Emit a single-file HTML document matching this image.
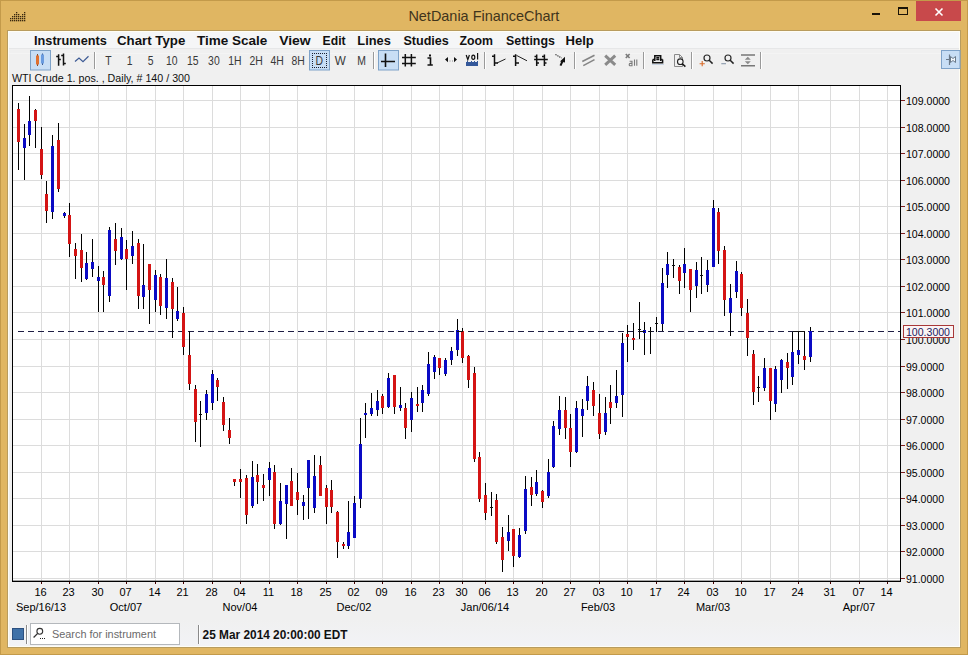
<!DOCTYPE html>
<html><head><meta charset="utf-8"><style>
html,body{margin:0;padding:0;}
body{width:968px;height:655px;position:relative;overflow:hidden;background:#e0b662;font-family:"Liberation Sans",sans-serif;}
.abs{position:absolute;}
svg text{font-family:"Liberation Sans",sans-serif;}
</style></head><body>
<div class="abs" style="left:0;top:0;width:968px;height:655px;box-shadow:inset 0 0 0 1px #c39a4a;"></div>
<div class="abs" style="left:8px;top:31px;width:952px;height:616px;background:#f0f0f0;box-shadow:0 0 0 1px #b89c5e;"></div>
<div class="abs" style="left:8px;top:620px;width:952px;height:27px;background:linear-gradient(#f0f0f0,#f2f3f6);"></div>
<div class="abs" style="left:8px;top:31px;width:952px;height:18px;background:#f5f6f7;"></div>
<div class="abs" style="left:8px;top:49px;width:952px;height:22px;background:#f0f0f0;"></div>
<div class="abs" style="left:8px;top:48px;width:952px;height:1px;background:#e6e7e8;"></div>
<div class="abs" style="left:8px;top:53px;width:952px;height:1px;background:#f4f4f4;"></div>
<div class="abs" style="left:8px;top:31px;width:952px;height:616px;box-shadow:inset -1px -1px 0 #fffdf4, inset 1px 1px 0 #fffdf4;"></div>
<svg class="abs" style="left:0;top:0" width="968" height="655" viewBox="0 0 968 655">
<rect x="16" y="12" width="1.3" height="1.3" fill="#3a2810"/>
<rect x="24" y="12" width="1.3" height="1.3" fill="#3a2810"/>
<rect x="14" y="14" width="1.3" height="1.3" fill="#3a2810"/>
<rect x="16" y="14" width="1.3" height="1.3" fill="#3a2810"/>
<rect x="18" y="14" width="1.3" height="1.3" fill="#3a2810"/>
<rect x="22" y="14" width="1.3" height="1.3" fill="#3a2810"/>
<rect x="24" y="14" width="1.3" height="1.3" fill="#3a2810"/>
<rect x="12" y="16" width="1.3" height="1.3" fill="#3a2810"/>
<rect x="14" y="16" width="1.3" height="1.3" fill="#3a2810"/>
<rect x="16" y="16" width="1.3" height="1.3" fill="#3a2810"/>
<rect x="18" y="16" width="1.3" height="1.3" fill="#3a2810"/>
<rect x="20" y="16" width="1.3" height="1.3" fill="#3a2810"/>
<rect x="22" y="16" width="1.3" height="1.3" fill="#3a2810"/>
<rect x="24" y="16" width="1.3" height="1.3" fill="#3a2810"/>
<rect x="10" y="18" width="1.3" height="1.3" fill="#3a2810"/>
<rect x="12" y="18" width="1.3" height="1.3" fill="#3a2810"/>
<rect x="14" y="18" width="1.3" height="1.3" fill="#3a2810"/>
<rect x="16" y="18" width="1.3" height="1.3" fill="#3a2810"/>
<rect x="18" y="18" width="1.3" height="1.3" fill="#3a2810"/>
<rect x="20" y="18" width="1.3" height="1.3" fill="#3a2810"/>
<rect x="22" y="18" width="1.3" height="1.3" fill="#3a2810"/>
<rect x="24" y="18" width="1.3" height="1.3" fill="#3a2810"/>
<rect x="10" y="20" width="1.3" height="1.3" fill="#3a2810"/>
<rect x="12" y="20" width="1.3" height="1.3" fill="#3a2810"/>
<rect x="14" y="20" width="1.3" height="1.3" fill="#3a2810"/>
<rect x="16" y="20" width="1.3" height="1.3" fill="#3a2810"/>
<rect x="18" y="20" width="1.3" height="1.3" fill="#3a2810"/>
<rect x="20" y="20" width="1.3" height="1.3" fill="#3a2810"/>
<rect x="22" y="20" width="1.3" height="1.3" fill="#3a2810"/>
<rect x="24" y="20" width="1.3" height="1.3" fill="#3a2810"/>
<text x="408.4" y="21" font-size="15" fill="#40341c" textLength="151" lengthAdjust="spacingAndGlyphs">NetDania FinanceChart</text>
<rect x="872" y="13" width="8" height="2" fill="#1a1408"/>
<rect x="898.5" y="7.5" width="9" height="7" fill="none" stroke="#1a1408" stroke-width="1"/><rect x="898" y="7" width="10" height="2" fill="#1a1408"/>
<rect x="916" y="1" width="45" height="20" fill="#c8494b"/>
<path d="M935.5 8.5 L942.5 15.5 M942.5 8.5 L935.5 15.5" stroke="#fff" stroke-width="1.6"/>
<text x="34" y="45" font-size="13" font-weight="bold" fill="#111" textLength="72.8" lengthAdjust="spacingAndGlyphs">Instruments</text>
<text x="117" y="45" font-size="13" font-weight="bold" fill="#111" textLength="68.3" lengthAdjust="spacingAndGlyphs">Chart Type</text>
<text x="197" y="45" font-size="13" font-weight="bold" fill="#111" textLength="70.4" lengthAdjust="spacingAndGlyphs">Time Scale</text>
<text x="279.2" y="45" font-size="13" font-weight="bold" fill="#111" textLength="31.5" lengthAdjust="spacingAndGlyphs">View</text>
<text x="322.6" y="45" font-size="13" font-weight="bold" fill="#111" textLength="23" lengthAdjust="spacingAndGlyphs">Edit</text>
<text x="357.3" y="45" font-size="13" font-weight="bold" fill="#111" textLength="33.5" lengthAdjust="spacingAndGlyphs">Lines</text>
<text x="403.4" y="45" font-size="13" font-weight="bold" fill="#111" textLength="45.5" lengthAdjust="spacingAndGlyphs">Studies</text>
<text x="459.4" y="45" font-size="13" font-weight="bold" fill="#111" textLength="33.5" lengthAdjust="spacingAndGlyphs">Zoom</text>
<text x="506" y="45" font-size="13" font-weight="bold" fill="#111" textLength="48.9" lengthAdjust="spacingAndGlyphs">Settings</text>
<text x="565.5" y="45" font-size="13" font-weight="bold" fill="#111" textLength="28.3" lengthAdjust="spacingAndGlyphs">Help</text>
<rect x="30.5" y="50.5" width="20" height="19.5" fill="#c8def5" stroke="#7ea2c8" stroke-width="1"/>
<rect x="37" y="54" width="1" height="12" fill="#7a4a30"/><rect x="36" y="55.5" width="3" height="9" fill="#e07030"/>
<rect x="42" y="53.5" width="1" height="11.5" fill="#3a5a90"/><rect x="41" y="54.5" width="3" height="9" fill="#6a9ce0"/>
<path d="M58.6 54.3 V65.8 M56.2 56.4 H58.6 M58.6 59.5 H60.8 M63.5 53.4 V65.6 M61.2 55.5 H63.5 M63.5 63.4 H65.8" stroke="#111" stroke-width="1.5" fill="none"/>
<polyline points="75,61.5 79,58 83,61.7 88.5,56.3" fill="none" stroke="#3d5a94" stroke-width="1.2"/>
<rect x="94" y="52" width="1" height="17" fill="#9a9a9a"/><rect x="95" y="52" width="1" height="17" fill="#fff"/>
<rect x="373" y="52" width="1" height="17" fill="#9a9a9a"/><rect x="374" y="52" width="1" height="17" fill="#fff"/>
<rect x="484" y="52" width="1" height="17" fill="#9a9a9a"/><rect x="485" y="52" width="1" height="17" fill="#fff"/>
<rect x="574" y="52" width="1" height="17" fill="#9a9a9a"/><rect x="575" y="52" width="1" height="17" fill="#fff"/>
<rect x="643" y="52" width="1" height="17" fill="#9a9a9a"/><rect x="644" y="52" width="1" height="17" fill="#fff"/>
<rect x="691" y="52" width="1" height="17" fill="#9a9a9a"/><rect x="692" y="52" width="1" height="17" fill="#fff"/>
<rect x="760" y="52" width="1" height="17" fill="#9a9a9a"/><rect x="761" y="52" width="1" height="17" fill="#fff"/>
<text x="108.5" y="65" font-size="13" fill="#383838" text-anchor="middle" textLength="6.36" lengthAdjust="spacingAndGlyphs">T</text>
<text x="129.57999999999998" y="65" font-size="13" fill="#383838" text-anchor="middle" textLength="5.78" lengthAdjust="spacingAndGlyphs">1</text>
<text x="150.66" y="65" font-size="13" fill="#383838" text-anchor="middle" textLength="5.78" lengthAdjust="spacingAndGlyphs">5</text>
<text x="171.74" y="65" font-size="13" fill="#383838" text-anchor="middle" textLength="11.58" lengthAdjust="spacingAndGlyphs">10</text>
<text x="192.82" y="65" font-size="13" fill="#383838" text-anchor="middle" textLength="11.58" lengthAdjust="spacingAndGlyphs">15</text>
<text x="213.89999999999998" y="65" font-size="13" fill="#383838" text-anchor="middle" textLength="11.58" lengthAdjust="spacingAndGlyphs">30</text>
<text x="234.98" y="65" font-size="13" fill="#383838" text-anchor="middle" textLength="13.30" lengthAdjust="spacingAndGlyphs">1H</text>
<text x="256.06" y="65" font-size="13" fill="#383838" text-anchor="middle" textLength="13.30" lengthAdjust="spacingAndGlyphs">2H</text>
<text x="277.14" y="65" font-size="13" fill="#383838" text-anchor="middle" textLength="13.30" lengthAdjust="spacingAndGlyphs">4H</text>
<text x="298.21999999999997" y="65" font-size="13" fill="#383838" text-anchor="middle" textLength="13.30" lengthAdjust="spacingAndGlyphs">8H</text>
<rect x="309.5" y="50.5" width="20" height="19.5" fill="#c8def5" stroke="#7ea2c8" stroke-width="1"/>
<rect x="312" y="53" width="1" height="1" fill="#1a2030"/><rect x="312" y="67" width="1" height="1" fill="#1a2030"/>
<rect x="314" y="53" width="1" height="1" fill="#1a2030"/><rect x="314" y="67" width="1" height="1" fill="#1a2030"/>
<rect x="316" y="53" width="1" height="1" fill="#1a2030"/><rect x="316" y="67" width="1" height="1" fill="#1a2030"/>
<rect x="318" y="53" width="1" height="1" fill="#1a2030"/><rect x="318" y="67" width="1" height="1" fill="#1a2030"/>
<rect x="320" y="53" width="1" height="1" fill="#1a2030"/><rect x="320" y="67" width="1" height="1" fill="#1a2030"/>
<rect x="322" y="53" width="1" height="1" fill="#1a2030"/><rect x="322" y="67" width="1" height="1" fill="#1a2030"/>
<rect x="324" y="53" width="1" height="1" fill="#1a2030"/><rect x="324" y="67" width="1" height="1" fill="#1a2030"/>
<rect x="326" y="53" width="1" height="1" fill="#1a2030"/><rect x="326" y="67" width="1" height="1" fill="#1a2030"/>
<rect x="312" y="55" width="1" height="1" fill="#1a2030"/><rect x="326" y="55" width="1" height="1" fill="#1a2030"/>
<rect x="312" y="57" width="1" height="1" fill="#1a2030"/><rect x="326" y="57" width="1" height="1" fill="#1a2030"/>
<rect x="312" y="59" width="1" height="1" fill="#1a2030"/><rect x="326" y="59" width="1" height="1" fill="#1a2030"/>
<rect x="312" y="61" width="1" height="1" fill="#1a2030"/><rect x="326" y="61" width="1" height="1" fill="#1a2030"/>
<rect x="312" y="63" width="1" height="1" fill="#1a2030"/><rect x="326" y="63" width="1" height="1" fill="#1a2030"/>
<rect x="312" y="65" width="1" height="1" fill="#1a2030"/><rect x="326" y="65" width="1" height="1" fill="#1a2030"/>
<text x="319.29999999999995" y="65" font-size="13" fill="#383838" text-anchor="middle" textLength="7.51" lengthAdjust="spacingAndGlyphs">D</text>
<text x="340.38" y="65" font-size="13" fill="#383838" text-anchor="middle" textLength="11.05" lengthAdjust="spacingAndGlyphs">W</text>
<text x="361.46" y="65" font-size="13" fill="#383838" text-anchor="middle" textLength="8.67" lengthAdjust="spacingAndGlyphs">M</text>
<rect x="378.5" y="50.5" width="20" height="19.5" fill="#c8def5" stroke="#7ea2c8" stroke-width="1"/>
<path d="M381 61.5 H395 M385.5 53.5 V67" stroke="#111" stroke-width="1.6"/>
<path d="M405.3 54 V66.5 M411.4 54 V66.5 M402 57.4 H415.8 M402 63.5 H415.8" stroke="#111" stroke-width="1.5"/>
<rect x="429" y="54.5" width="2" height="2" fill="#111"/><path d="M427.5 58 H430.5 V64.5 M427.5 65 H432.8" stroke="#111" stroke-width="1.6" fill="none"/>
<path d="M448 57 L445 59.6 L448 62.2 Z M454 57 L457 59.6 L454 62.2 Z" fill="#111"/><path d="M449.5 61 h1 M452 61 h1" stroke="#888" stroke-width="1"/>
<path d="M466.2 55 L467.8 59.6 L469.4 55 M477.6 53 V59.6" stroke="#111" stroke-width="1.2" fill="none"/><ellipse cx="473.3" cy="57.3" rx="1.5" ry="2.1" fill="none" stroke="#111" stroke-width="1.2"/>
<rect x="466" y="62" width="12" height="4" fill="#34589a"/><rect x="467" y="61" width="1" height="1" fill="#34589a"/><rect x="471" y="61" width="1" height="1" fill="#34589a"/><rect x="474" y="61" width="1" height="1" fill="#34589a"/><rect x="477" y="61" width="1" height="1" fill="#34589a"/>
<path d="M494.5 54.3 V66.1 M492 56.2 H494.5 M494.5 62.9 H498" stroke="#111" stroke-width="1.5" fill="none"/><path d="M497 63 L505.5 59" stroke="#222" stroke-width="1"/>
<path d="M515.6 54.3 V66.1 M513 56.2 H515.6 M515.6 62.9 H519" stroke="#111" stroke-width="1.5" fill="none"/><path d="M516.5 55.4 L527 60.8" stroke="#222" stroke-width="1"/>
<path d="M536.7 54.5 V66.1 M544.4 54.5 V66.1 M534.1 59.6 H547.8 M534.5 56.5 H536.7 M536.7 63 H539 M542 56.5 H544.4 M544.4 63 H546.5" stroke="#111" stroke-width="1.5" fill="none"/>
<path d="M555.5 54.5 L561.5 58" stroke="#111" stroke-width="1.1" stroke-dasharray="1.2,1"/><path d="M565 56.8 L560 61.5 L565 62.6 Z" fill="#111"/><path d="M562.8 60.5 L560.5 65.6" stroke="#111" stroke-width="2"/>
<path d="M582.3 61.5 L594.5 55.3 M583.3 65.6 L594.5 59.6" stroke="#858585" stroke-width="1.6"/>
<path d="M605.2 55.6 L615.2 64.8 M615.2 55.6 L605.2 64.8" stroke="#8a8a8a" stroke-width="3"/>
<path d="M625.8 54 L629.6 58 M629.6 54 L625.8 58" stroke="#7a7a7a" stroke-width="1.6"/>
<path d="M629.6 61.2 H632 V65.8 H630 Q629.2 65.8 629.2 64.8 Q629.2 63.4 630.2 63.4 H632 M634.5 59.6 V65.8 M636.8 59.6 V65.8" fill="none" stroke="#7a7a7a" stroke-width="1.1"/>
<path d="M654.8 61 V55.8 H660.7 V61 M656.3 57.7 H659.3 M656.3 59.4 H659.3 M652.8 59.6 V62.8 H662.6 V59.6 M652.8 59.6 H654.8 M660.7 59.6 H662.6" fill="none" stroke="#111" stroke-width="1.5"/><rect x="652" y="64" width="12" height="1" fill="#c8d4e4"/>
<path d="M674.5 54.5 h5 l3 3 v9 h-8 Z M679.5 54.5 v3 h3" fill="none" stroke="#8a8a8a" stroke-width="1"/><circle cx="680.3" cy="61.7" r="2.8" fill="#f4f4f4" stroke="#222" stroke-width="1.1"/><path d="M682.3 63.8 L685.4 66.6" stroke="#111" stroke-width="1.5"/>
<circle cx="707" cy="58" r="3" fill="none" stroke="#2a2a2a" stroke-width="1.2"/><path d="M709.2 60.2 L712.6 63.6" stroke="#222" stroke-width="1.5"/><path d="M702.2 61 V66.3 M699.6 63.7 H704.8" stroke="#d86a28" stroke-width="1.1"/>
<circle cx="728" cy="58" r="3" fill="none" stroke="#2a2a2a" stroke-width="1.2"/><path d="M730.2 60.2 L733.6 63.6" stroke="#222" stroke-width="1.5"/><path d="M721.3 63.7 H726" stroke="#8898aa" stroke-width="1.1"/>
<path d="M741 55 H755 M741 65.8 H755" stroke="#777" stroke-width="1.6"/><path d="M744.8 59.8 L747.8 56.8 L750.8 59.8 Z M744.8 61.2 L747.8 64.2 L750.8 61.2 Z" fill="#8a8a8a"/>
<rect x="941.5" y="50.5" width="18.5" height="18" fill="#c8def5" stroke="#7ea2c8" stroke-width="1"/>
<path d="M946 59.5 H949.5 M949.5 54.5 V65" stroke="#6a7a8a" stroke-width="1.2" fill="none"/><path d="M950.5 56.5 L953 58.5 L955.5 56.5 V62.5 L953 60.5 L950.5 62.5 Z" fill="#f4f8fc" stroke="#6a7a8a" stroke-width="1"/>
<text x="12" y="82" font-size="11" fill="#111" textLength="178" lengthAdjust="spacingAndGlyphs">WTI Crude 1. pos. , Daily, # 140 / 300</text>
<rect x="12.5" y="628.5" width="11" height="11" fill="#3f71a8" stroke="#2c5080" stroke-width="1"/>
<rect x="26" y="625" width="1" height="19" fill="#8a8a8a"/><rect x="27" y="625" width="1" height="19" fill="#fff"/>
<rect x="30.5" y="623.5" width="149" height="21" fill="#fff" stroke="#b4b8bc" stroke-width="1"/>
<circle cx="39.8" cy="631.3" r="2.9" fill="none" stroke="#333" stroke-width="1.1"/><path d="M37.7 633.4 L33.6 637.5" stroke="#333" stroke-width="1.3"/><rect x="40" y="638" width="1" height="1" fill="#222"/><rect x="42" y="638" width="1" height="1" fill="#222"/><rect x="44" y="638" width="1" height="1" fill="#222"/>
<text x="52" y="637.9" font-size="11.3" fill="#6a6a6a" textLength="104" lengthAdjust="spacingAndGlyphs">Search for instrument</text>
<rect x="198" y="625" width="1" height="19" fill="#8a8a8a"/><rect x="199" y="625" width="1" height="19" fill="#fff"/>
<text x="202.6" y="638.8" font-size="12" font-weight="bold" fill="#111" textLength="145" lengthAdjust="spacingAndGlyphs">25 Mar 2014 20:00:00 EDT</text>
<rect x="12" y="85" width="889" height="497" fill="#fff"/>
<rect x="13" y="578" width="887" height="1" fill="#dcdcdc"/>
<rect x="13" y="551" width="887" height="1" fill="#dcdcdc"/>
<rect x="13" y="525" width="887" height="1" fill="#dcdcdc"/>
<rect x="13" y="498" width="887" height="1" fill="#dcdcdc"/>
<rect x="13" y="472" width="887" height="1" fill="#dcdcdc"/>
<rect x="13" y="445" width="887" height="1" fill="#dcdcdc"/>
<rect x="13" y="419" width="887" height="1" fill="#dcdcdc"/>
<rect x="13" y="392" width="887" height="1" fill="#dcdcdc"/>
<rect x="13" y="366" width="887" height="1" fill="#dcdcdc"/>
<rect x="13" y="339" width="887" height="1" fill="#dcdcdc"/>
<rect x="13" y="312" width="887" height="1" fill="#dcdcdc"/>
<rect x="13" y="286" width="887" height="1" fill="#dcdcdc"/>
<rect x="13" y="259" width="887" height="1" fill="#dcdcdc"/>
<rect x="13" y="233" width="887" height="1" fill="#dcdcdc"/>
<rect x="13" y="206" width="887" height="1" fill="#dcdcdc"/>
<rect x="13" y="180" width="887" height="1" fill="#dcdcdc"/>
<rect x="13" y="153" width="887" height="1" fill="#dcdcdc"/>
<rect x="13" y="127" width="887" height="1" fill="#dcdcdc"/>
<rect x="13" y="100" width="887" height="1" fill="#dcdcdc"/>
<rect x="41" y="86" width="1" height="495" fill="#dcdcdc"/>
<rect x="69" y="86" width="1" height="495" fill="#dcdcdc"/>
<rect x="98" y="86" width="1" height="495" fill="#dcdcdc"/>
<rect x="126" y="86" width="1" height="495" fill="#dcdcdc"/>
<rect x="155" y="86" width="1" height="495" fill="#dcdcdc"/>
<rect x="183" y="86" width="1" height="495" fill="#dcdcdc"/>
<rect x="212" y="86" width="1" height="495" fill="#dcdcdc"/>
<rect x="240" y="86" width="1" height="495" fill="#dcdcdc"/>
<rect x="269" y="86" width="1" height="495" fill="#dcdcdc"/>
<rect x="297" y="86" width="1" height="495" fill="#dcdcdc"/>
<rect x="326" y="86" width="1" height="495" fill="#dcdcdc"/>
<rect x="354" y="86" width="1" height="495" fill="#dcdcdc"/>
<rect x="382" y="86" width="1" height="495" fill="#dcdcdc"/>
<rect x="411" y="86" width="1" height="495" fill="#dcdcdc"/>
<rect x="439" y="86" width="1" height="495" fill="#dcdcdc"/>
<rect x="462" y="86" width="1" height="495" fill="#dcdcdc"/>
<rect x="485" y="86" width="1" height="495" fill="#dcdcdc"/>
<rect x="513" y="86" width="1" height="495" fill="#dcdcdc"/>
<rect x="542" y="86" width="1" height="495" fill="#dcdcdc"/>
<rect x="570" y="86" width="1" height="495" fill="#dcdcdc"/>
<rect x="599" y="86" width="1" height="495" fill="#dcdcdc"/>
<rect x="627" y="86" width="1" height="495" fill="#dcdcdc"/>
<rect x="656" y="86" width="1" height="495" fill="#dcdcdc"/>
<rect x="684" y="86" width="1" height="495" fill="#dcdcdc"/>
<rect x="713" y="86" width="1" height="495" fill="#dcdcdc"/>
<rect x="741" y="86" width="1" height="495" fill="#dcdcdc"/>
<rect x="770" y="86" width="1" height="495" fill="#dcdcdc"/>
<rect x="798" y="86" width="1" height="495" fill="#dcdcdc"/>
<rect x="830" y="86" width="1" height="495" fill="#dcdcdc"/>
<rect x="859" y="86" width="1" height="495" fill="#dcdcdc"/>
<rect x="887" y="86" width="1" height="495" fill="#dcdcdc"/>
<line x1="18" y1="331.5" x2="900" y2="331.5" stroke="#1e1e44" stroke-width="1" stroke-dasharray="6,4"/>
<rect x="18" y="103" width="1" height="67" fill="#000"/>
<rect x="17" y="109" width="3" height="33" fill="#d41414"/>
<rect x="24" y="124" width="1" height="56" fill="#000"/>
<rect x="23" y="138" width="3" height="10" fill="#0a0ac4"/>
<rect x="29" y="96" width="1" height="50" fill="#000"/>
<rect x="28" y="121" width="3" height="14" fill="#0a0ac4"/>
<rect x="35" y="109" width="1" height="39" fill="#000"/>
<rect x="34" y="110" width="3" height="11" fill="#d41414"/>
<rect x="41" y="127" width="1" height="52" fill="#000"/>
<rect x="40" y="149" width="3" height="26" fill="#d41414"/>
<rect x="46" y="181" width="1" height="42" fill="#000"/>
<rect x="45" y="194" width="3" height="17" fill="#d41414"/>
<rect x="52" y="135" width="1" height="84" fill="#000"/>
<rect x="51" y="146" width="3" height="66" fill="#0a0ac4"/>
<rect x="58" y="123" width="1" height="69" fill="#000"/>
<rect x="57" y="140" width="3" height="49" fill="#d41414"/>
<rect x="64" y="212" width="1" height="6" fill="#000"/>
<rect x="63" y="213" width="3" height="3" fill="#0a0ac4"/>
<rect x="69" y="203" width="1" height="54" fill="#000"/>
<rect x="68" y="215" width="3" height="29" fill="#d41414"/>
<rect x="75" y="243" width="1" height="36" fill="#000"/>
<rect x="74" y="249" width="3" height="7" fill="#d41414"/>
<rect x="81" y="234" width="1" height="48" fill="#000"/>
<rect x="80" y="250" width="3" height="18" fill="#d41414"/>
<rect x="86" y="252" width="1" height="28" fill="#000"/>
<rect x="85" y="263" width="3" height="16" fill="#0a0ac4"/>
<rect x="92" y="239" width="1" height="38" fill="#000"/>
<rect x="91" y="262" width="3" height="7" fill="#0a0ac4"/>
<rect x="98" y="266" width="1" height="46" fill="#000"/>
<rect x="97" y="277" width="3" height="4" fill="#0a0ac4"/>
<rect x="103" y="271" width="1" height="41" fill="#000"/>
<rect x="102" y="277" width="3" height="8" fill="#d41414"/>
<rect x="109" y="227" width="1" height="75" fill="#000"/>
<rect x="108" y="230" width="3" height="66" fill="#0a0ac4"/>
<rect x="115" y="223" width="1" height="42" fill="#000"/>
<rect x="114" y="239" width="3" height="12" fill="#d41414"/>
<rect x="121" y="228" width="1" height="32" fill="#000"/>
<rect x="120" y="237" width="3" height="22" fill="#0a0ac4"/>
<rect x="126" y="240" width="1" height="50" fill="#000"/>
<rect x="125" y="249" width="3" height="10" fill="#d41414"/>
<rect x="132" y="231" width="1" height="33" fill="#000"/>
<rect x="131" y="246" width="3" height="10" fill="#0a0ac4"/>
<rect x="138" y="239" width="1" height="70" fill="#000"/>
<rect x="137" y="243" width="3" height="53" fill="#d41414"/>
<rect x="143" y="244" width="1" height="65" fill="#000"/>
<rect x="142" y="285" width="3" height="12" fill="#0a0ac4"/>
<rect x="149" y="264" width="1" height="60" fill="#000"/>
<rect x="148" y="264" width="3" height="26" fill="#d41414"/>
<rect x="155" y="270" width="1" height="42" fill="#000"/>
<rect x="154" y="275" width="3" height="25" fill="#0a0ac4"/>
<rect x="160" y="274" width="1" height="41" fill="#000"/>
<rect x="159" y="277" width="3" height="29" fill="#d41414"/>
<rect x="166" y="259" width="1" height="60" fill="#000"/>
<rect x="165" y="278" width="3" height="30" fill="#0a0ac4"/>
<rect x="172" y="278" width="1" height="60" fill="#000"/>
<rect x="171" y="282" width="3" height="27" fill="#d41414"/>
<rect x="177" y="287" width="1" height="34" fill="#000"/>
<rect x="176" y="311" width="3" height="8" fill="#0a0ac4"/>
<rect x="183" y="307" width="1" height="48" fill="#000"/>
<rect x="182" y="313" width="3" height="34" fill="#d41414"/>
<rect x="189" y="331" width="1" height="59" fill="#000"/>
<rect x="188" y="355" width="3" height="29" fill="#d41414"/>
<rect x="195" y="385" width="1" height="57" fill="#000"/>
<rect x="194" y="389" width="3" height="33" fill="#d41414"/>
<rect x="200" y="401" width="1" height="46" fill="#000"/>
<rect x="199" y="414" width="3" height="1" fill="#111"/>
<rect x="206" y="390" width="1" height="30" fill="#000"/>
<rect x="205" y="394" width="3" height="19" fill="#0a0ac4"/>
<rect x="212" y="370" width="1" height="40" fill="#000"/>
<rect x="211" y="374" width="3" height="29" fill="#0a0ac4"/>
<rect x="217" y="378" width="1" height="23" fill="#000"/>
<rect x="216" y="380" width="3" height="7" fill="#d41414"/>
<rect x="223" y="397" width="1" height="34" fill="#000"/>
<rect x="222" y="402" width="3" height="23" fill="#d41414"/>
<rect x="229" y="418" width="1" height="26" fill="#000"/>
<rect x="228" y="430" width="3" height="8" fill="#d41414"/>
<rect x="234" y="479" width="1" height="7" fill="#000"/>
<rect x="233" y="479" width="3" height="3" fill="#d41414"/>
<rect x="240" y="469" width="1" height="29" fill="#000"/>
<rect x="239" y="479" width="3" height="3" fill="#d41414"/>
<rect x="246" y="475" width="1" height="49" fill="#000"/>
<rect x="245" y="478" width="3" height="37" fill="#d41414"/>
<rect x="252" y="461" width="1" height="47" fill="#000"/>
<rect x="251" y="477" width="3" height="29" fill="#0a0ac4"/>
<rect x="257" y="464" width="1" height="40" fill="#000"/>
<rect x="256" y="475" width="3" height="7" fill="#d41414"/>
<rect x="263" y="474" width="1" height="27" fill="#000"/>
<rect x="262" y="485" width="3" height="3" fill="#d41414"/>
<rect x="269" y="462" width="1" height="34" fill="#000"/>
<rect x="268" y="468" width="3" height="12" fill="#0a0ac4"/>
<rect x="274" y="465" width="1" height="64" fill="#000"/>
<rect x="273" y="472" width="3" height="52" fill="#d41414"/>
<rect x="280" y="483" width="1" height="42" fill="#000"/>
<rect x="279" y="501" width="3" height="23" fill="#0a0ac4"/>
<rect x="286" y="485" width="1" height="54" fill="#000"/>
<rect x="285" y="485" width="3" height="19" fill="#0a0ac4"/>
<rect x="291" y="468" width="1" height="38" fill="#000"/>
<rect x="290" y="481" width="3" height="25" fill="#d41414"/>
<rect x="297" y="473" width="1" height="42" fill="#000"/>
<rect x="296" y="492" width="3" height="8" fill="#d41414"/>
<rect x="303" y="495" width="1" height="25" fill="#000"/>
<rect x="302" y="502" width="3" height="4" fill="#0a0ac4"/>
<rect x="308" y="460" width="1" height="59" fill="#000"/>
<rect x="307" y="460" width="3" height="28" fill="#0a0ac4"/>
<rect x="314" y="455" width="1" height="58" fill="#000"/>
<rect x="313" y="476" width="3" height="32" fill="#0a0ac4"/>
<rect x="320" y="456" width="1" height="40" fill="#000"/>
<rect x="319" y="465" width="3" height="31" fill="#d41414"/>
<rect x="326" y="485" width="1" height="39" fill="#000"/>
<rect x="325" y="488" width="3" height="19" fill="#d41414"/>
<rect x="331" y="480" width="1" height="33" fill="#000"/>
<rect x="330" y="490" width="3" height="17" fill="#d41414"/>
<rect x="337" y="511" width="1" height="47" fill="#000"/>
<rect x="336" y="512" width="3" height="30" fill="#d41414"/>
<rect x="343" y="542" width="1" height="7" fill="#000"/>
<rect x="342" y="544" width="3" height="2" fill="#d41414"/>
<rect x="348" y="501" width="1" height="48" fill="#000"/>
<rect x="347" y="532" width="3" height="14" fill="#0a0ac4"/>
<rect x="354" y="496" width="1" height="42" fill="#000"/>
<rect x="353" y="503" width="3" height="35" fill="#0a0ac4"/>
<rect x="360" y="418" width="1" height="90" fill="#000"/>
<rect x="359" y="444" width="3" height="55" fill="#0a0ac4"/>
<rect x="365" y="403" width="1" height="35" fill="#000"/>
<rect x="364" y="413" width="3" height="2" fill="#0a0ac4"/>
<rect x="371" y="393" width="1" height="23" fill="#000"/>
<rect x="370" y="408" width="3" height="6" fill="#0a0ac4"/>
<rect x="377" y="390" width="1" height="26" fill="#000"/>
<rect x="376" y="401" width="3" height="9" fill="#0a0ac4"/>
<rect x="382" y="394" width="1" height="20" fill="#000"/>
<rect x="381" y="396" width="3" height="12" fill="#d41414"/>
<rect x="388" y="373" width="1" height="35" fill="#000"/>
<rect x="387" y="378" width="3" height="29" fill="#0a0ac4"/>
<rect x="394" y="375" width="1" height="39" fill="#000"/>
<rect x="393" y="375" width="3" height="32" fill="#d41414"/>
<rect x="400" y="387" width="1" height="24" fill="#000"/>
<rect x="399" y="405" width="3" height="3" fill="#0a0ac4"/>
<rect x="405" y="403" width="1" height="36" fill="#000"/>
<rect x="404" y="408" width="3" height="20" fill="#d41414"/>
<rect x="411" y="392" width="1" height="40" fill="#000"/>
<rect x="410" y="398" width="3" height="22" fill="#0a0ac4"/>
<rect x="417" y="387" width="1" height="25" fill="#000"/>
<rect x="416" y="404" width="3" height="2" fill="#d41414"/>
<rect x="422" y="385" width="1" height="27" fill="#000"/>
<rect x="421" y="390" width="3" height="13" fill="#0a0ac4"/>
<rect x="428" y="352" width="1" height="44" fill="#000"/>
<rect x="427" y="364" width="3" height="30" fill="#0a0ac4"/>
<rect x="434" y="355" width="1" height="24" fill="#000"/>
<rect x="433" y="357" width="3" height="15" fill="#0a0ac4"/>
<rect x="439" y="358" width="1" height="17" fill="#000"/>
<rect x="438" y="358" width="3" height="10" fill="#d41414"/>
<rect x="445" y="358" width="1" height="18" fill="#000"/>
<rect x="444" y="360" width="3" height="14" fill="#0a0ac4"/>
<rect x="451" y="347" width="1" height="18" fill="#000"/>
<rect x="450" y="351" width="3" height="9" fill="#0a0ac4"/>
<rect x="457" y="319" width="1" height="37" fill="#000"/>
<rect x="456" y="330" width="3" height="20" fill="#0a0ac4"/>
<rect x="462" y="328" width="1" height="35" fill="#000"/>
<rect x="461" y="331" width="3" height="27" fill="#d41414"/>
<rect x="468" y="355" width="1" height="33" fill="#000"/>
<rect x="467" y="356" width="3" height="24" fill="#d41414"/>
<rect x="474" y="367" width="1" height="95" fill="#000"/>
<rect x="473" y="373" width="3" height="86" fill="#d41414"/>
<rect x="479" y="452" width="1" height="50" fill="#000"/>
<rect x="478" y="457" width="3" height="42" fill="#d41414"/>
<rect x="485" y="483" width="1" height="37" fill="#000"/>
<rect x="484" y="495" width="3" height="18" fill="#d41414"/>
<rect x="491" y="492" width="1" height="24" fill="#000"/>
<rect x="490" y="507" width="3" height="1" fill="#111"/>
<rect x="496" y="494" width="1" height="50" fill="#000"/>
<rect x="495" y="500" width="3" height="42" fill="#d41414"/>
<rect x="502" y="527" width="1" height="45" fill="#000"/>
<rect x="501" y="537" width="3" height="23" fill="#d41414"/>
<rect x="508" y="515" width="1" height="36" fill="#000"/>
<rect x="507" y="532" width="3" height="9" fill="#0a0ac4"/>
<rect x="513" y="529" width="1" height="38" fill="#000"/>
<rect x="512" y="529" width="3" height="27" fill="#d41414"/>
<rect x="519" y="528" width="1" height="30" fill="#000"/>
<rect x="518" y="535" width="3" height="22" fill="#0a0ac4"/>
<rect x="525" y="476" width="1" height="58" fill="#000"/>
<rect x="524" y="489" width="3" height="42" fill="#0a0ac4"/>
<rect x="531" y="477" width="1" height="29" fill="#000"/>
<rect x="530" y="487" width="3" height="8" fill="#d41414"/>
<rect x="536" y="470" width="1" height="26" fill="#000"/>
<rect x="535" y="482" width="3" height="12" fill="#0a0ac4"/>
<rect x="542" y="490" width="1" height="18" fill="#000"/>
<rect x="541" y="491" width="3" height="11" fill="#d41414"/>
<rect x="548" y="459" width="1" height="39" fill="#000"/>
<rect x="547" y="472" width="3" height="24" fill="#0a0ac4"/>
<rect x="553" y="421" width="1" height="47" fill="#000"/>
<rect x="552" y="426" width="3" height="41" fill="#0a0ac4"/>
<rect x="559" y="396" width="1" height="39" fill="#000"/>
<rect x="558" y="410" width="3" height="19" fill="#0a0ac4"/>
<rect x="565" y="397" width="1" height="42" fill="#000"/>
<rect x="564" y="410" width="3" height="18" fill="#d41414"/>
<rect x="570" y="414" width="1" height="53" fill="#000"/>
<rect x="569" y="428" width="3" height="24" fill="#d41414"/>
<rect x="576" y="401" width="1" height="52" fill="#000"/>
<rect x="575" y="408" width="3" height="44" fill="#0a0ac4"/>
<rect x="582" y="399" width="1" height="38" fill="#000"/>
<rect x="581" y="409" width="3" height="7" fill="#0a0ac4"/>
<rect x="587" y="376" width="1" height="34" fill="#000"/>
<rect x="586" y="386" width="3" height="15" fill="#0a0ac4"/>
<rect x="593" y="382" width="1" height="34" fill="#000"/>
<rect x="592" y="390" width="3" height="16" fill="#d41414"/>
<rect x="599" y="394" width="1" height="45" fill="#000"/>
<rect x="598" y="413" width="3" height="21" fill="#d41414"/>
<rect x="605" y="397" width="1" height="38" fill="#000"/>
<rect x="604" y="413" width="3" height="19" fill="#0a0ac4"/>
<rect x="610" y="385" width="1" height="39" fill="#000"/>
<rect x="609" y="402" width="3" height="6" fill="#d41414"/>
<rect x="616" y="370" width="1" height="38" fill="#000"/>
<rect x="615" y="396" width="3" height="7" fill="#0a0ac4"/>
<rect x="622" y="333" width="1" height="84" fill="#000"/>
<rect x="621" y="343" width="3" height="52" fill="#0a0ac4"/>
<rect x="627" y="325" width="1" height="37" fill="#000"/>
<rect x="626" y="334" width="3" height="3" fill="#d41414"/>
<rect x="633" y="323" width="1" height="27" fill="#000"/>
<rect x="632" y="338" width="3" height="2" fill="#d41414"/>
<rect x="639" y="302" width="1" height="37" fill="#000"/>
<rect x="638" y="329" width="3" height="1" fill="#111"/>
<rect x="644" y="322" width="1" height="33" fill="#000"/>
<rect x="643" y="330" width="3" height="3" fill="#0a0ac4"/>
<rect x="650" y="327" width="1" height="27" fill="#000"/>
<rect x="649" y="331" width="3" height="1" fill="#111"/>
<rect x="656" y="317" width="1" height="15" fill="#000"/>
<rect x="655" y="323" width="3" height="1" fill="#111"/>
<rect x="662" y="268" width="1" height="63" fill="#000"/>
<rect x="661" y="283" width="3" height="41" fill="#0a0ac4"/>
<rect x="667" y="252" width="1" height="36" fill="#000"/>
<rect x="666" y="264" width="3" height="11" fill="#0a0ac4"/>
<rect x="673" y="259" width="1" height="19" fill="#000"/>
<rect x="672" y="265" width="3" height="1" fill="#111"/>
<rect x="679" y="265" width="1" height="29" fill="#000"/>
<rect x="678" y="267" width="3" height="14" fill="#d41414"/>
<rect x="684" y="248" width="1" height="40" fill="#000"/>
<rect x="683" y="264" width="3" height="9" fill="#0a0ac4"/>
<rect x="690" y="269" width="1" height="43" fill="#000"/>
<rect x="689" y="269" width="3" height="21" fill="#d41414"/>
<rect x="696" y="262" width="1" height="36" fill="#000"/>
<rect x="695" y="270" width="3" height="16" fill="#0a0ac4"/>
<rect x="701" y="257" width="1" height="37" fill="#000"/>
<rect x="700" y="275" width="3" height="1" fill="#111"/>
<rect x="707" y="260" width="1" height="32" fill="#000"/>
<rect x="706" y="270" width="3" height="15" fill="#0a0ac4"/>
<rect x="713" y="200" width="1" height="67" fill="#000"/>
<rect x="712" y="208" width="3" height="59" fill="#0a0ac4"/>
<rect x="718" y="208" width="1" height="56" fill="#000"/>
<rect x="717" y="212" width="3" height="39" fill="#d41414"/>
<rect x="724" y="246" width="1" height="70" fill="#000"/>
<rect x="723" y="250" width="3" height="50" fill="#d41414"/>
<rect x="730" y="284" width="1" height="52" fill="#000"/>
<rect x="729" y="298" width="3" height="15" fill="#0a0ac4"/>
<rect x="736" y="261" width="1" height="37" fill="#000"/>
<rect x="735" y="271" width="3" height="21" fill="#0a0ac4"/>
<rect x="741" y="272" width="1" height="44" fill="#000"/>
<rect x="740" y="274" width="3" height="34" fill="#d41414"/>
<rect x="747" y="299" width="1" height="57" fill="#000"/>
<rect x="746" y="313" width="3" height="25" fill="#d41414"/>
<rect x="753" y="350" width="1" height="55" fill="#000"/>
<rect x="752" y="354" width="3" height="38" fill="#d41414"/>
<rect x="758" y="376" width="1" height="26" fill="#000"/>
<rect x="757" y="387" width="3" height="1" fill="#111"/>
<rect x="764" y="358" width="1" height="33" fill="#000"/>
<rect x="763" y="368" width="3" height="20" fill="#0a0ac4"/>
<rect x="770" y="368" width="1" height="52" fill="#000"/>
<rect x="769" y="368" width="3" height="33" fill="#d41414"/>
<rect x="775" y="366" width="1" height="46" fill="#000"/>
<rect x="774" y="369" width="3" height="35" fill="#0a0ac4"/>
<rect x="781" y="359" width="1" height="34" fill="#000"/>
<rect x="780" y="360" width="3" height="20" fill="#0a0ac4"/>
<rect x="787" y="353" width="1" height="36" fill="#000"/>
<rect x="786" y="362" width="3" height="6" fill="#d41414"/>
<rect x="792" y="332" width="1" height="53" fill="#000"/>
<rect x="791" y="352" width="3" height="25" fill="#0a0ac4"/>
<rect x="798" y="332" width="1" height="32" fill="#000"/>
<rect x="797" y="350" width="3" height="5" fill="#0a0ac4"/>
<rect x="804" y="332" width="1" height="38" fill="#000"/>
<rect x="803" y="356" width="3" height="4" fill="#d41414"/>
<rect x="810" y="327" width="1" height="35" fill="#000"/>
<rect x="809" y="331" width="3" height="26" fill="#0a0ac4"/>
<rect x="793" y="331" width="12" height="1" fill="#111"/><rect x="457" y="331" width="6" height="1" fill="#111"/><rect x="639" y="331" width="6" height="1" fill="#111"/>
<rect x="12.5" y="85.5" width="888" height="496" fill="none" stroke="#000" stroke-width="1"/>
<rect x="12" y="580" width="889" height="2" fill="#000" opacity="0.35"/>
<rect x="41" y="582" width="1" height="2" fill="#400"/>
<text x="40.5" y="596" font-size="11" text-anchor="middle">16</text>
<rect x="69" y="582" width="1" height="2" fill="#400"/>
<text x="68.5" y="596" font-size="11" text-anchor="middle">23</text>
<rect x="98" y="582" width="1" height="2" fill="#400"/>
<text x="97.5" y="596" font-size="11" text-anchor="middle">30</text>
<rect x="126" y="582" width="1" height="2" fill="#400"/>
<text x="125.5" y="596" font-size="11" text-anchor="middle">07</text>
<rect x="155" y="582" width="1" height="2" fill="#400"/>
<text x="154.5" y="596" font-size="11" text-anchor="middle">14</text>
<rect x="183" y="582" width="1" height="2" fill="#400"/>
<text x="182.5" y="596" font-size="11" text-anchor="middle">21</text>
<rect x="212" y="582" width="1" height="2" fill="#400"/>
<text x="211.5" y="596" font-size="11" text-anchor="middle">28</text>
<rect x="240" y="582" width="1" height="2" fill="#400"/>
<text x="239.5" y="596" font-size="11" text-anchor="middle">04</text>
<rect x="269" y="582" width="1" height="2" fill="#400"/>
<text x="268.5" y="596" font-size="11" text-anchor="middle">11</text>
<rect x="297" y="582" width="1" height="2" fill="#400"/>
<text x="296.5" y="596" font-size="11" text-anchor="middle">18</text>
<rect x="326" y="582" width="1" height="2" fill="#400"/>
<text x="325.5" y="596" font-size="11" text-anchor="middle">25</text>
<rect x="354" y="582" width="1" height="2" fill="#400"/>
<text x="353.5" y="596" font-size="11" text-anchor="middle">02</text>
<rect x="382" y="582" width="1" height="2" fill="#400"/>
<text x="381.5" y="596" font-size="11" text-anchor="middle">09</text>
<rect x="411" y="582" width="1" height="2" fill="#400"/>
<text x="410.5" y="596" font-size="11" text-anchor="middle">16</text>
<rect x="439" y="582" width="1" height="2" fill="#400"/>
<text x="438.5" y="596" font-size="11" text-anchor="middle">23</text>
<rect x="462" y="582" width="1" height="2" fill="#400"/>
<text x="461.5" y="596" font-size="11" text-anchor="middle">30</text>
<rect x="485" y="582" width="1" height="2" fill="#400"/>
<text x="484.5" y="596" font-size="11" text-anchor="middle">06</text>
<rect x="513" y="582" width="1" height="2" fill="#400"/>
<text x="512.5" y="596" font-size="11" text-anchor="middle">13</text>
<rect x="542" y="582" width="1" height="2" fill="#400"/>
<text x="541.5" y="596" font-size="11" text-anchor="middle">20</text>
<rect x="570" y="582" width="1" height="2" fill="#400"/>
<text x="569.5" y="596" font-size="11" text-anchor="middle">27</text>
<rect x="599" y="582" width="1" height="2" fill="#400"/>
<text x="598.5" y="596" font-size="11" text-anchor="middle">03</text>
<rect x="627" y="582" width="1" height="2" fill="#400"/>
<text x="626.5" y="596" font-size="11" text-anchor="middle">10</text>
<rect x="656" y="582" width="1" height="2" fill="#400"/>
<text x="655.5" y="596" font-size="11" text-anchor="middle">17</text>
<rect x="684" y="582" width="1" height="2" fill="#400"/>
<text x="683.5" y="596" font-size="11" text-anchor="middle">24</text>
<rect x="713" y="582" width="1" height="2" fill="#400"/>
<text x="712.5" y="596" font-size="11" text-anchor="middle">03</text>
<rect x="741" y="582" width="1" height="2" fill="#400"/>
<text x="740.5" y="596" font-size="11" text-anchor="middle">10</text>
<rect x="770" y="582" width="1" height="2" fill="#400"/>
<text x="769.5" y="596" font-size="11" text-anchor="middle">17</text>
<rect x="798" y="582" width="1" height="2" fill="#400"/>
<text x="797.5" y="596" font-size="11" text-anchor="middle">24</text>
<rect x="830" y="582" width="1" height="2" fill="#400"/>
<text x="829.5" y="596" font-size="11" text-anchor="middle">31</text>
<rect x="859" y="582" width="1" height="2" fill="#400"/>
<text x="858.5" y="596" font-size="11" text-anchor="middle">07</text>
<rect x="887" y="582" width="1" height="2" fill="#400"/>
<text x="886.5" y="596" font-size="11" text-anchor="middle">14</text>
<text x="41" y="610.5" font-size="11" text-anchor="middle">Sep/16/13</text>
<text x="126" y="610.5" font-size="11" text-anchor="middle">Oct/07</text>
<text x="240" y="610.5" font-size="11" text-anchor="middle">Nov/04</text>
<text x="354" y="610.5" font-size="11" text-anchor="middle">Dec/02</text>
<text x="485" y="610.5" font-size="11" text-anchor="middle">Jan/06/14</text>
<text x="598" y="610.5" font-size="11" text-anchor="middle">Feb/03</text>
<text x="713" y="610.5" font-size="11" text-anchor="middle">Mar/03</text>
<text x="859" y="610.5" font-size="11" text-anchor="middle">Apr/07</text>
<rect x="901" y="578" width="4" height="1" fill="#802020"/>
<text x="906" y="582.5" font-size="11" textLength="38" lengthAdjust="spacingAndGlyphs">91.0000</text>
<rect x="901" y="551" width="4" height="1" fill="#802020"/>
<text x="906" y="555.5" font-size="11" textLength="38" lengthAdjust="spacingAndGlyphs">92.0000</text>
<rect x="901" y="525" width="4" height="1" fill="#802020"/>
<text x="906" y="529.5" font-size="11" textLength="38" lengthAdjust="spacingAndGlyphs">93.0000</text>
<rect x="901" y="498" width="4" height="1" fill="#802020"/>
<text x="906" y="502.5" font-size="11" textLength="38" lengthAdjust="spacingAndGlyphs">94.0000</text>
<rect x="901" y="472" width="4" height="1" fill="#802020"/>
<text x="906" y="476.5" font-size="11" textLength="38" lengthAdjust="spacingAndGlyphs">95.0000</text>
<rect x="901" y="445" width="4" height="1" fill="#802020"/>
<text x="906" y="449.5" font-size="11" textLength="38" lengthAdjust="spacingAndGlyphs">96.0000</text>
<rect x="901" y="419" width="4" height="1" fill="#802020"/>
<text x="906" y="423.5" font-size="11" textLength="38" lengthAdjust="spacingAndGlyphs">97.0000</text>
<rect x="901" y="392" width="4" height="1" fill="#802020"/>
<text x="906" y="396.5" font-size="11" textLength="38" lengthAdjust="spacingAndGlyphs">98.0000</text>
<rect x="901" y="366" width="4" height="1" fill="#802020"/>
<text x="906" y="370.5" font-size="11" textLength="38" lengthAdjust="spacingAndGlyphs">99.0000</text>
<rect x="901" y="339" width="4" height="1" fill="#802020"/>
<text x="906" y="343.5" font-size="11" textLength="44" lengthAdjust="spacingAndGlyphs">100.0000</text>
<rect x="901" y="312" width="4" height="1" fill="#802020"/>
<text x="906" y="316.5" font-size="11" textLength="44" lengthAdjust="spacingAndGlyphs">101.0000</text>
<rect x="901" y="286" width="4" height="1" fill="#802020"/>
<text x="906" y="290.5" font-size="11" textLength="44" lengthAdjust="spacingAndGlyphs">102.0000</text>
<rect x="901" y="259" width="4" height="1" fill="#802020"/>
<text x="906" y="263.5" font-size="11" textLength="44" lengthAdjust="spacingAndGlyphs">103.0000</text>
<rect x="901" y="233" width="4" height="1" fill="#802020"/>
<text x="906" y="237.5" font-size="11" textLength="44" lengthAdjust="spacingAndGlyphs">104.0000</text>
<rect x="901" y="206" width="4" height="1" fill="#802020"/>
<text x="906" y="210.5" font-size="11" textLength="44" lengthAdjust="spacingAndGlyphs">105.0000</text>
<rect x="901" y="180" width="4" height="1" fill="#802020"/>
<text x="906" y="184.5" font-size="11" textLength="44" lengthAdjust="spacingAndGlyphs">106.0000</text>
<rect x="901" y="153" width="4" height="1" fill="#802020"/>
<text x="906" y="157.5" font-size="11" textLength="44" lengthAdjust="spacingAndGlyphs">107.0000</text>
<rect x="901" y="127" width="4" height="1" fill="#802020"/>
<text x="906" y="131.5" font-size="11" textLength="44" lengthAdjust="spacingAndGlyphs">108.0000</text>
<rect x="901" y="100" width="4" height="1" fill="#802020"/>
<text x="906" y="104.5" font-size="11" textLength="44" lengthAdjust="spacingAndGlyphs">109.0000</text>
<rect x="903.5" y="325.5" width="50" height="12" fill="#fbf4f4" stroke="#a83838" stroke-width="1"/>
<text x="906" y="336" font-size="11" fill="#1a1a60" textLength="44" lengthAdjust="spacingAndGlyphs">100.3000</text>
</svg>
</body></html>
